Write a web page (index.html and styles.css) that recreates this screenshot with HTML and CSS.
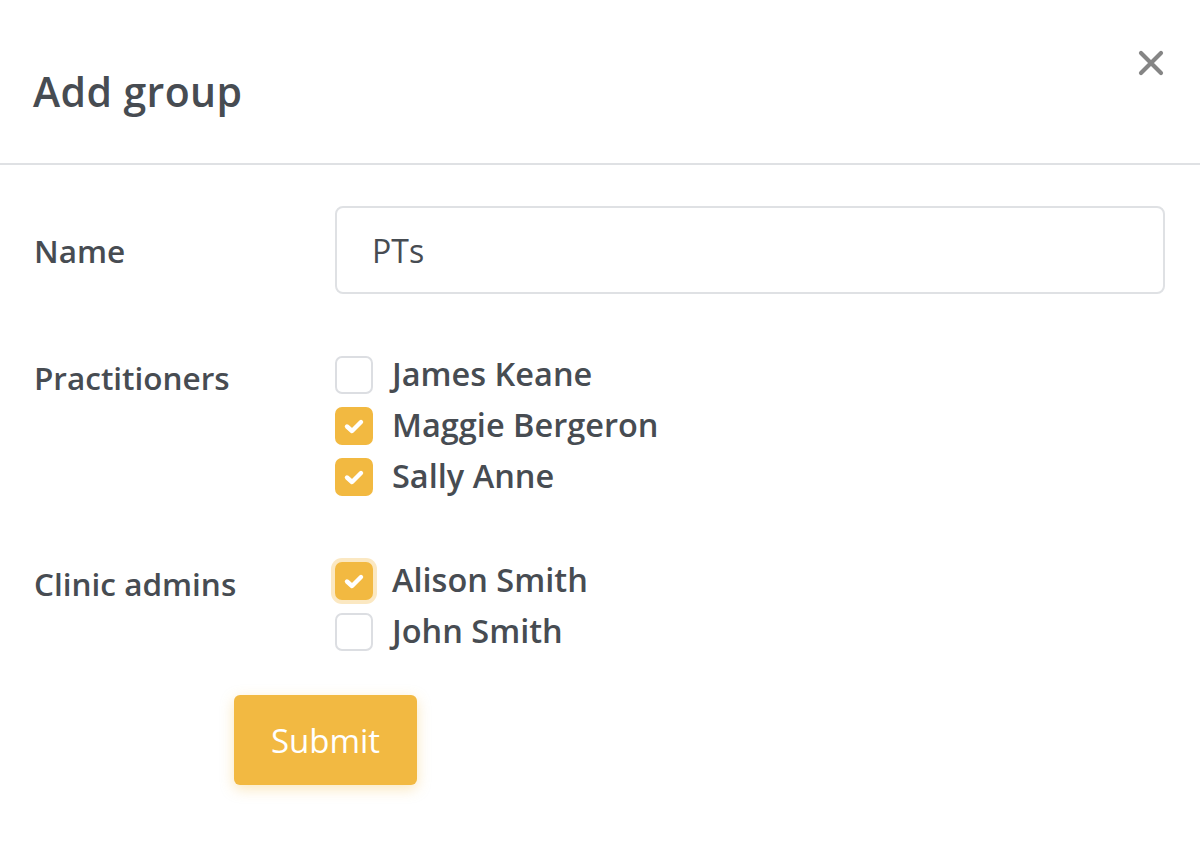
FILE: index.html
```html
<!DOCTYPE html>
<html lang="en">
<head>
<meta charset="utf-8">
<title>Add group</title>
<link rel="stylesheet" href="styles.css">
</head>
<body>
<div class="modal">
  <header class="modal-header">
    <h1 class="modal-title">Add group</h1>
    <button class="close" aria-label="Close">
      <svg width="26" height="26" viewBox="0 0 26 26"><path d="M3 3 L23 23 M23 3 L3 23" stroke="#858585" stroke-width="4.2" stroke-linecap="round" fill="none"/></svg>
    </button>
  </header>
  <form class="modal-body">
    <div class="row row-name">
      <label class="label">Name</label>
      <div class="input">PTs</div>
    </div>
    <div class="row row-group">
      <div class="label label-top">Practitioners</div>
      <div class="checks">
        <div class="check"><span class="box"></span><span class="text">James Keane</span></div>
        <div class="check"><span class="box on"><svg viewBox="0 0 34 34"><path d="M10 17.5 L15 22 L24 13" stroke="#fff" stroke-width="4.4" stroke-linecap="round" stroke-linejoin="round" fill="none"/></svg></span><span class="text">Maggie Bergeron</span></div>
        <div class="check"><span class="box on"><svg viewBox="0 0 34 34"><path d="M10 17.5 L15 22 L24 13" stroke="#fff" stroke-width="4.4" stroke-linecap="round" stroke-linejoin="round" fill="none"/></svg></span><span class="text">Sally Anne</span></div>
      </div>
    </div>
    <div class="row row-group row-admins">
      <div class="label label-top">Clinic admins</div>
      <div class="checks">
        <div class="check"><span class="box on focus"><svg viewBox="0 0 34 34"><path d="M10 17.5 L15 22 L24 13" stroke="#fff" stroke-width="4.4" stroke-linecap="round" stroke-linejoin="round" fill="none"/></svg></span><span class="text">Alison Smith</span></div>
        <div class="check"><span class="box"></span><span class="text">John Smith</span></div>
      </div>
    </div>
    <div class="actions">
      <button type="button" class="submit">Submit</button>
    </div>
  </form>
</div>
</body>
</html>
```

FILE: styles.css
```css
* { box-sizing: border-box; }
html, body { margin: 0; padding: 0; background: #fff; }
body {
  font-family: "Open Sans", "Noto Sans", sans-serif;
  color: #474c52;
  width: 1200px;
  height: 851px;
  overflow: hidden;
}
.modal { width: 1200px; }
.modal-header {
  height: 165px;
  border-bottom: 2px solid #dfe1e4;
  display: flex;
  align-items: flex-start;
  justify-content: space-between;
  padding: 0 36px 0 33px;
}
.modal-title {
  margin: 0;
  padding-top: 63px;
  font-size: 41px;
  font-weight: 600;
  line-height: 56px;
  letter-spacing: 0.4px;
}
.close {
  background: none;
  border: 0;
  padding: 0;
  margin-top: 50px;
  width: 26px;
  height: 26px;
  cursor: pointer;
}
.close svg { display: block; }
.modal-body {
  padding: 41px 34px 0 34px;
  display: flex;
  flex-direction: column;
}
.row { display: flex; }
.label {
  width: 301px;
  flex: none;
  font-size: 31.5px;
  font-weight: 600;
}
.row-name { align-items: center; }
.input {
  flex: 1;
  height: 88px;
  margin-right: 1px;
  border: 2px solid #dfe1e4;
  border-radius: 8px;
  padding: 0 35px;
  display: flex;
  align-items: center;
  font-size: 32px;
  font-weight: 500;
}
.row-group { margin-top: 55px; }
.row-admins { margin-top: 53px; }
.label-top { line-height: 51px; padding-top: 3px; }
.checks { display: flex; flex-direction: column; }
.check {
  height: 51px;
  display: flex;
  align-items: center;
}
.box {
  width: 38px;
  height: 38px;
  border: 2px solid #dcdee2;
  border-radius: 7px;
  background: #fff;
  flex: none;
  margin-right: 19px;
}
.box.on { background: #f2b941; border-color: #f2b941; }
.box.focus { box-shadow: 0 0 0 4px #fbe8c2; }
.box svg { display: block; width: 34px; height: 34px; }
.text {
  font-size: 32.5px;
  font-weight: 600;
  position: relative;
  top: -1px;
}
.actions { padding-left: 200px; margin-top: 38px; }
.submit {
  width: 183px;
  height: 90px;
  border: 0;
  border-radius: 6px;
  background: #f2b942;
  color: #fff;
  font-family: inherit;
  font-size: 33px;
  font-weight: 500;
  box-shadow: 0 4px 14px rgba(242, 185, 66, 0.35);
}
```
